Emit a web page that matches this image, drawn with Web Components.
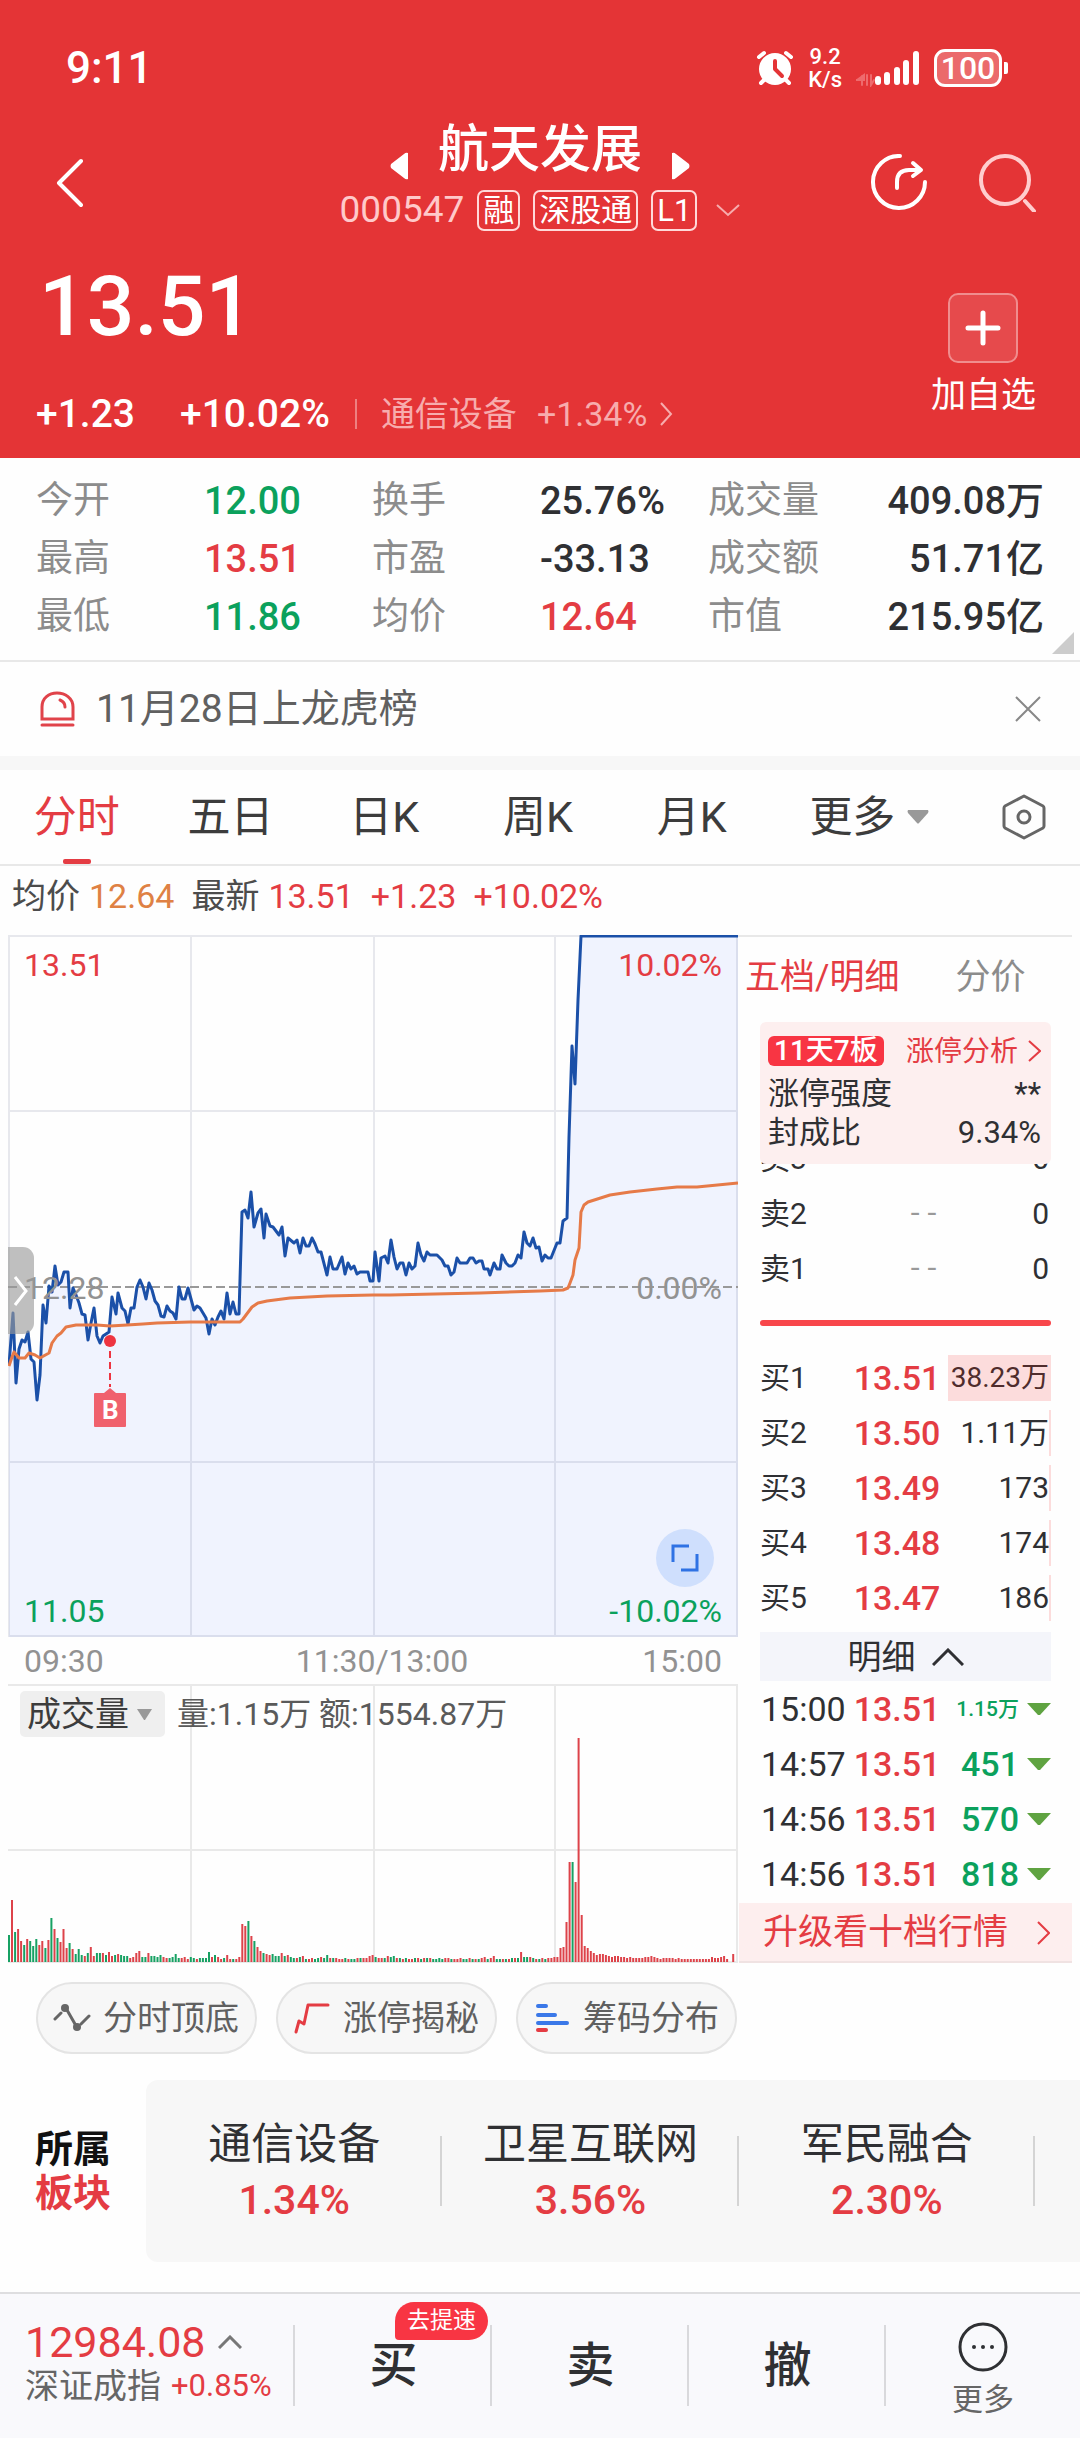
<!DOCTYPE html>
<html lang="zh-CN">
<head>
<meta charset="utf-8">
<meta name="viewport" content="width=device-width, initial-scale=1">
<title>航天发展 000547</title>
<style>
   :root {
      --col-brand: #e43436;
      --col-up: #e43c43;
      --col-down: #0ba15c;
      --col-text: #2f3033;
      --col-sub: #666;
      --col-mute: #8c8c8c;
      --col-line: #e8e8e8;
      --col-panel: #f7f7f7;
   }
   body {
      margin: 0;
      background: #fefefe;
      color: var(--col-text);
      font-family: Roboto, "Noto Sans CJK SC", sans-serif;
      font-size: 34px;
      line-height: 44px;
   }
   .band {
      height: 14px;
      background: var(--col-panel);
   }
   .market {
      display: grid;
      grid-template-columns: minmax(0, 730fr) minmax(0, 334fr);
      padding: 0 8px;
   }
   .chips {
      display: flex;
      gap: 19px;
      padding: 19px 36px 26px;
   }
</style>
</head>
<body>
   <stock-header name="航天发展" code="000547">
      <status-bar slot="status"></status-bar>
      <stock-tag>融</stock-tag>
      <stock-tag>深股通</stock-tag>
      <stock-tag>L1</stock-tag>
   </stock-header>
   <stat-grid></stat-grid>
   <notice-bar>11月28日上龙虎榜</notice-bar>
   <div class="band"></div>
   <period-tabs></period-tabs>
   <quote-line></quote-line>
   <div class="market">
      <time-chart></time-chart>
      <order-book></order-book>
   </div>
   <div class="chips">
      <tool-chip>
         <svg slot="icon" width="38" height="32" viewBox="0 0 38 32" fill="none" stroke="#666" stroke-width="3" stroke-linecap="round">
            <path d="M2 17 8 11M14 8 22 22M28 22 36 14"/>
            <circle cx="12" cy="6" r="4" fill="#666" stroke="none"/>
            <circle cx="24" cy="25" r="4" fill="#666" stroke="none"/>
         </svg>
         分时顶底
      </tool-chip>
      <tool-chip>
         <svg slot="icon" width="38" height="32" viewBox="0 0 38 32" fill="none" stroke="#e43c43" stroke-width="3" stroke-linecap="round" stroke-linejoin="round">
            <path d="M3 30 6 19 11 22 15 3H35"/>
         </svg>
         涨停揭秘
      </tool-chip>
      <tool-chip>
         <svg slot="icon" width="38" height="32" viewBox="0 0 38 32" stroke-width="4" stroke-linecap="round">
            <path d="M5 4H13M5 13H22M5 21H34" stroke="#3a78e8"/>
            <path d="M5 28H13" stroke="#e43c43"/>
         </svg>
         筹码分布
      </tool-chip>
   </div>
   <sector-strip>
      <sector-item change="1.34%">通信设备</sector-item>
      <sector-item change="3.56%">卫星互联网</sector-item>
      <sector-item change="2.30%">军民融合</sector-item>
   </sector-strip>
   <trade-bar></trade-bar>

<script>
const base_css = `
   *, :host { box-sizing: border-box; }
   :host { display: block; }
   svg { display: block; flex: none; }
   button, select {
      margin: 0;
      padding: 0;
      border: 0;
      background: none;
      color: inherit;
      font: inherit;
      appearance: none;
   }
   a { color: inherit; text-decoration: none; }
   .up { color: var(--col-up); }
   .down { color: var(--col-down); }
`;

function define(tag, render)
{
   customElements.define(tag, class extends HTMLElement
   {
      connectedCallback()
      {
         if (this.shadowRoot) return;
         const template = document.createElement('template');
         template.innerHTML = `<style>${base_css}</style>` + render(this);
         this.attachShadow({ mode: 'open' }).appendChild(template.content);
      }
   });
}

define('status-bar', () => `
   <style>
      :host {
         display: flex;
         justify-content: space-between;
         align-items: center;
         height: 104px;
         padding: 0 72px 0 66px;
      }
      .time { font-size: 44px; font-weight: 500; }
      .right { display: flex; align-items: center; gap: 14px; }
      .speed { font-size: 22px; font-weight: 500; line-height: 23px; text-align: center; }
      .speed span { display: block; }
      .battery { display: flex; align-items: center; gap: 2px; }
      .level {
         width: 68px;
         height: 38px;
         border: 3px solid #fff;
         border-radius: 11px;
         background: #ffffff44;
         font-size: 32px;
         font-weight: 500;
         line-height: 32px;
         text-align: center;
      }
      .tip { width: 4px; height: 12px; border-radius: 0 2px 2px 0; background: #fff; }
   </style>
   <span class="time">9:11</span>
   <div class="right">
      <svg width="38" height="38" viewBox="0 0 38 38" fill="none" stroke="#fff" stroke-width="4" stroke-linecap="round">
         <circle cx="19" cy="20" r="16" fill="#fff" stroke="none"/>
         <path d="M3 8 8 4M30 4 35 8M8 31 5 34M30 31 33 34"/>
         <path d="M19 12V20L26 27" stroke="#e43436" stroke-linejoin="round"/>
      </svg>
      <div class="speed"><span>9.2</span><span>K/s</span></div>
      <svg width="64" height="38" viewBox="0 0 64 38" fill="none" stroke="#fff" stroke-width="6" stroke-linecap="round">
         <path d="M22 30V33M31 26V33M41 21V33M50 14V33M60 5V33"/>
         <path d="M0 31H8V26L1 31M6 27V36M11 26V36M15 26V36L18 31" stroke="#ee6b6d" stroke-width="2"/>
      </svg>
      <div class="battery"><div class="level">100</div><div class="tip"></div></div>
   </div>
`);

define('stock-tag', () => `
   <style>
      :host {
         padding: 0 4px;
         border: 2px solid #ffd9d9;
         border-radius: 7px;
         font-size: 31px;
         line-height: 37px;
      }
   </style>
   <slot></slot>
`);

define('stock-header', el => `
   <style>
      :host { background: var(--col-brand); color: #fff; padding-top: 16px; }
      nav {
         display: grid;
         grid-template-columns: 1fr auto 1fr;
         align-items: center;
         height: 126px;
         padding: 0 44px;
      }
      .back { padding-left: 9px; justify-self: start; }
      .title { align-self: start; }
      .name {
         display: flex;
         justify-content: center;
         gap: 30px;
         font-size: 51px;
         line-height: 60px;
      }
      .name button { padding-top: 32px; }
      h1 { margin: 0; font: inherit; font-weight: 500; }
      .code { display: flex; align-items: center; gap: 13px; margin-top: 8px; }
      .code > span { font-size: 37px; color: #ffc9ca; }
      .code svg { margin-left: 6px; }
      .actions { display: flex; justify-content: flex-end; gap: 52px; }
      .quote { display: flex; justify-content: space-between; padding: 17px 36px 22px; }
      .price { padding-left: 3px; font-size: 84px; font-weight: 500; line-height: 88px; }
      .change { display: flex; align-items: center; margin-top: 41px; font-size: 39px; font-weight: 500; }
      .change span + span { margin-left: 45px; }
      .change a {
         display: flex;
         align-items: center;
         gap: 20px;
         height: 30px;
         margin-left: 25px;
         padding-left: 24px;
         border-left: 2px solid #ee8081;
         font-size: 34px;
         font-weight: 400;
         color: #f7acad;
      }
      .change svg { margin-left: -8px; }
      .add {
         display: flex;
         flex-direction: column;
         align-items: center;
         align-self: start;
         gap: 13px;
         margin: 30px 8px 0 0;
         font-size: 35px;
         line-height: 40px;
      }
      .add i {
         display: grid;
         place-items: center;
         width: 70px;
         height: 70px;
         border: 2px solid #f08d8e;
         border-radius: 10px;
         background: #e64a4c;
      }
   </style>
   <slot name="status"></slot>
   <nav>
      <button class="back" aria-label="返回">
         <svg width="30" height="50" viewBox="0 0 30 50" fill="none" stroke="#fff" stroke-width="4" stroke-linecap="round" stroke-linejoin="round"><path d="M28 3 6 25 28 47"/></svg>
      </button>
      <div class="title">
         <div class="name">
            <button aria-label="上一只"><svg width="18" height="28" viewBox="0 0 18 28" fill="#fff"><path d="M18 1V27Q16 28 14 26L1 16Q0 14 1 12L14 2Q16 0 18 1Z"/></svg></button>
            <h1>${el.getAttribute('name')}</h1>
            <button aria-label="下一只"><svg width="18" height="28" viewBox="0 0 18 28" fill="#fff"><path d="M0 1V27Q2 28 4 26L17 16Q18 14 17 12L4 2Q2 0 0 1Z"/></svg></button>
         </div>
         <div class="code">
            <span>${el.getAttribute('code')}</span>
            <slot></slot>
            <svg width="24" height="14" viewBox="0 0 24 14" fill="none" stroke="#f7acad" stroke-width="2"><path d="M1 2 12 12 23 2"/></svg>
         </div>
      </div>
      <div class="actions">
         <button aria-label="分享">
            <svg width="56" height="58" viewBox="0 0 56 58" fill="none" stroke="#fff" stroke-width="4" stroke-linecap="round" stroke-linejoin="round">
               <path d="M29 2A26 26 0 1 0 54 28"/>
               <path d="M26 34V28Q26 16 38 16H48M42 9 50 16 42 22"/>
            </svg>
         </button>
         <button aria-label="搜索">
            <svg width="57" height="58" viewBox="0 0 57 58" fill="none" stroke="#ffcdce" stroke-width="4" stroke-linecap="round">
               <circle cx="26" cy="26" r="24"/><path d="M46 47 55 57"/>
            </svg>
         </button>
      </div>
   </nav>
   <div class="quote">
      <div>
         <div class="price">13.51</div>
         <div class="change">
            <span>+1.23</span><span>+10.02%</span>
            <a href="#sector">通信设备 <b style="font-weight:400">+1.34%</b>
               <svg width="14" height="24" viewBox="0 0 14 24" fill="none" stroke="#f7acad" stroke-width="2"><path d="M2 1 12 12 2 23"/></svg>
            </a>
         </div>
      </div>
      <button class="add">
         <i><svg width="36" height="36" viewBox="0 0 36 36" stroke="#fff" stroke-width="5" stroke-linecap="round"><path d="M18 3V33M3 18H33"/></svg></i>
         加自选
      </button>
   </div>
`);

const stats = [
   ['今开', '12.00', 'down'], ['换手', '25.76%', ''], ['成交量', '409.08万', ''],
   ['最高', '13.51', 'up'], ['市盈', '-33.13', ''], ['成交额', '51.71亿', ''],
   ['最低', '11.86', 'down'], ['均价', '12.64', 'up'], ['市值', '215.95亿', ''],
];

define('stat-grid', () => `
   <style>
      :host {
         position: relative;
         padding: 14px 36px;
         border-bottom: 2px solid var(--col-line);
         font-size: 37px;
         line-height: 58px;
      }
      dl { display: grid; grid-template-columns: repeat(6, minmax(0, 1fr)); margin: 0; }
      dt { color: var(--col-mute); }
      dd { margin: 0; font-size: 38px; font-weight: 500; white-space: nowrap; }
      dd:nth-of-type(3n) { text-align: right; }
      .corner { position: absolute; right: 6px; bottom: 6px; }
   </style>
   <dl>${stats.map(([k, v, cls]) => `<dt>${k}</dt><dd class="${cls}">${v}</dd>`).join('')}</dl>
   <svg class="corner" width="22" height="22" viewBox="0 0 22 22" fill="#ccc"><path d="M22 0V22H0Z"/></svg>
`);

define('notice-bar', () => `
   <style>
      :host {
         display: flex;
         align-items: center;
         gap: 20px;
         height: 94px;
         padding: 0 39px;
         font-size: 39px;
         color: #606060;
      }
      button { margin-left: auto; }
   </style>
   <svg width="37" height="38" viewBox="0 0 37 38" fill="none" stroke="#e0434a" stroke-width="3" stroke-linecap="round">
      <path d="M3 29V17C3 8 10 3 18 3S34 8 34 17V29ZM3 35H34M21 10Q26 12 26 17"/>
   </svg>
   <slot></slot>
   <button aria-label="关闭"><svg width="26" height="26" viewBox="0 0 26 26" stroke="#888" stroke-width="2"><path d="M1 1 25 25M25 1 1 25"/></svg></button>
`);

define('period-tabs', () => `
   <style>
      :host { border-bottom: 2px solid var(--col-line); font-size: 43px; color: #3c3c3c; }
      nav {
         display: grid;
         grid-template-columns: repeat(5, 154fr) 202fr 108fr;
         height: 94px;
         padding-right: 2px;
      }
      button { display: flex; flex-direction: column; align-items: center; justify-content: center; }
      .on { color: var(--col-up); position: relative; }
      .on::after {
         content: "";
         position: absolute;
         bottom: 0;
         width: 28px;
         height: 5px;
         border-radius: 2px;
         background: var(--col-up);
      }
      .more { flex-direction: row; align-items: center; gap: 12px; }
      .set { align-items: flex-start; padding-left: 32px; }
   </style>
   <nav>
      <button class="on">分时</button><button>五日</button><button>日K</button><button>周K</button><button>月K</button>
      <button class="more">更多 <svg width="22" height="14" viewBox="0 0 22 14" fill="#999"><path d="M1 0H21Q22 1 21 3L12 13Q11 14 10 13L1 3Q0 1 1 0Z"/></svg></button>
      <button class="set" aria-label="设置">
         <svg width="44" height="46" viewBox="0 0 44 46" fill="none" stroke="#666" stroke-width="3" stroke-linejoin="round">
            <path d="M22 2 41 12Q42 13 42 14V32Q42 33 41 34L22 44 3 34Q2 33 2 32V14Q2 13 3 12Z"/><circle cx="22" cy="23" r="6"/>
         </svg>
      </button>
   </nav>
`);

define('quote-line', () => `
   <style>
      :host { display: flex; gap: 17px; height: 69px; padding: 8px 12px; color: #4c4c4c; }
      .avg { color: #df8144; }
      p { display: flex; gap: 9px; margin: 0; }
   </style>
   <p>均价 <span class="avg">12.64</span></p>
   <p>最新 <span class="up">13.51</span></p>
   <span class="up">+1.23</span>
   <span class="up">+10.02%</span>
`);

// Points on a 730 x 702 plane, the day's limit-up at y=0 and limit-down at y=702.
const price_points = `1,430 5,378 8,448 11,414 14,405 17,407 20,397 23,424 26,427 29,465 32,440 35,370 38,388 41,351 44,357
   47,331 50,350 53,347 56,337 60,337 62,373 65,353 68,360 71,368 74,379 77,380 80,405 83,388 86,373 89,401 92,408 95,401
   101,397 104,362 108,379 110,358 114,373 117,376 120,389 123,373 126,373 129,352 132,345 135,352 138,364 141,348 144,355
   147,366 150,370 153,381 156,382 159,371 162,376 165,378 168,384 171,352 174,364 177,364 180,353 183,364 186,375 189,371
   192,373 198,383 201,399 204,384 207,390 210,382 213,376 216,384 219,358 222,379 225,367 228,379 231,379 234,277 237,275
   240,283 243,257 246,292 250,278 253,274 256,303 258,279 262,291 265,292 271,300 274,292 277,321 280,303 286,308 289,305
   292,318 295,303 298,311 301,311 304,303 307,309 310,317 313,317 319,340 322,322 325,334 329,334 334,322 337,339 340,328
   343,334 346,331 349,339 352,337 360,337 362,346 365,346 367,317 371,346 373,323 377,321 380,328 383,305 386,322 389,334
   392,328 395,328 398,340 401,328 404,334 407,331 410,308 413,320 416,326 419,317 422,320 429,320 434,325 437,331 440,331
   443,340 446,337 449,323 452,328 459,328 462,323 465,323 468,328 471,326 474,326 476,334 480,334 482,340 486,328 489,334
   492,334 494,320 498,328 501,331 504,331 507,328 510,320 513,323 516,297 519,308 522,311 525,303 528,313 531,312 534,326
   537,320 540,323 543,323 549,308 552,308 555,286 559,283 561,202 564,111 567,149 570,65 573,1 730,1`;

const average_points = `1,431 4,422 6,417 11,423 17,423 21,418 27,420 32,423 41,418 44,408 49,401 53,398 58,392 68,390 89,390
   102,391 119,390 135,389 149,388 182,387 232,387 235,384 244,372 250,368 259,366 282,363 319,361 365,360 382,360 472,358
   532,356 555,355 560,353 562,348 565,340 567,325 571,313 573,277 576,270 580,267 602,260 622,257 649,254 669,252 689,252
   730,248`;

// One bar a minute: direction and height.
const volumes = `G27 R62 G30 R33 R21 G17 R23 G21 G16 G23 R17 R21 G14 R22 G44 R33 G24 R20 R33 R14 G19 R13 G8 G13 G7 R6 G9 R15
   R6 G9 G9 R9 G7 R10 R6 G7 R8 G7 G6 G6 R4 R5 R9 R11 G5 G5 R9 G6 G6 G5 G7 R5 R4 G4 G5 G8 G4 R4 R5 R3 G5 G4 R3 G4 G4 G4 G10
   R5 G7 R5 R3 G4 R7 R3 G3 R3 R5 R38 R36 G41 R26 G21 R15 R11 G9 R8 R7 G8 G6 G6 R9 G6 R7 G5 G4 R4 G5 R6 G3 R3 R4 G3 G4 R5
   G4 G7 R4 G4 R4 R3 R3 G4 R3 G3 G3 R4 G4 R4 R4 R6 R7 G5 R4 R4 G4 R6 G5 G6 R4 G4 R3 G4 R3 R3 G4 R4 G3 R4 G4 R4 G3 G3 G4 G3
   R4 R4 G3 R3 R3 R4 G3 G3 R4 G3 R3 G3 R4 R5 G3 R4 R6 G3 G3 R3 G3 R3 G4 R4 G4 R10 G5 G5 R5 G4 R3 G3 R4 G3 R4 R4 R5 R5 R14
   R15 R40 R100 G100 R80 R224 R47 R16 R14 R11 R9 R7 R8 R8 R7 R6 R5 R6 R6 R5 R5 R4 R5 R4 R4 R4 R4 R5 R5 R6 R5 R4 R3 R4 R4
   R4 R4 R3 R4 R3 R3 R3 R3 R3 R3 R3 R3 R3 R3 R5 R4 R4 R5 R6 R3 R0 R8`.split(/\s+/);

function bars(direction)
{
   return volumes.map((v, i) => v[0] === direction ? `M${Math.round(i * 30.3 + 10) / 10} 278v-${v.slice(1)}` : '').join('');
}

define('time-chart', () => `
   <style>
      :host { font-size: 32px; color: #929292; min-width: 0; }
      .plot { position: relative; height: 702px; }
      .volume { position: relative; height: 279px; }
      .plot > svg, .volume > svg { width: 100%; height: 100%; }
      svg path, svg polyline { vector-effect: non-scaling-stroke; }
      .scale {
         position: absolute;
         inset: 0;
         display: flex;
         flex-direction: column;
         justify-content: space-between;
         padding: 8px 16px 4px;
      }
      .scale div, .axis { display: flex; justify-content: space-between; }
      .axis { padding: 2px 16px 1px; }
      .axis .mid { margin-left: 18px; }
      .handle {
         position: absolute;
         left: 0;
         top: 312px;
         width: 26px;
         height: 87px;
         border-radius: 0 11px 11px 0;
         background: #999999a0;
      }
      .handle svg { margin: 0 5px; }
      .mark {
         position: absolute;
         left: 14%;
         top: 57%;
         width: 32px;
         margin-left: -16px;
         display: flex;
         flex-direction: column;
         align-items: center;
         color: #fff;
         font-size: 26px;
         font-weight: 700;
         line-height: 34px;
         text-align: center;
      }
      .mark span { width: 32px; background: #f0616d; border-radius: 1px; }
      .expand {
         position: absolute;
         right: 24px;
         bottom: 50px;
         width: 58px;
         height: 58px;
         border-radius: 50%;
         background: #cfdffd;
         display: grid;
         place-items: center;
      }
      .head {
         position: absolute;
         inset: 7px 12px auto;
         display: flex;
         align-items: center;
         gap: 12px;
         white-space: nowrap;
         color: #5a5a5a;
      }
      label {
         display: flex;
         align-items: center;
         gap: 8px;
         height: 46px;
         padding: 0 13px 0 7px;
         border-radius: 5px;
         background: #efefef;
         color: #3c3c3c;
         font-size: 34px;
      }
   </style>
   <div class="plot">
      <svg viewBox="0 0 730 702" preserveAspectRatio="none" fill="none">
         <polygon points="${price_points} 730,702 1,702" fill="#f0f3fe"/>
         <path d="M0 1H730M0 176H730M0 527H730M0 701H730M1 0V702M183 0V702M366 0V702M547 0V702M729 0V702" stroke="#1e285a" stroke-opacity=".1" stroke-width="2"/>
         <path d="M0 352H730" stroke="#999" stroke-width="2" stroke-dasharray="9 4"/>
         <polyline points="${price_points}" stroke="#1b50a8" stroke-width="3" stroke-linejoin="round"/>
         <polyline points="${average_points}" stroke="#e67a48" stroke-width="3" stroke-linejoin="round"/>
      </svg>
      <div class="scale">
         <div class="up"><span>13.51</span><span>10.02%</span></div>
         <div><span>12.28</span><span>0.00%</span></div>
         <div class="down"><span>11.05</span><span>-10.02%</span></div>
      </div>
      <button class="handle" aria-label="展开">
         <svg width="16" height="30" viewBox="0 0 16 30" fill="none" stroke="#fff" stroke-width="3"><path d="M2 1 13 15 2 29"/></svg>
      </button>
      <div class="mark">
         <svg width="16" height="58" viewBox="0 0 16 58" fill="none">
            <circle cx="8" cy="6" r="6" fill="#ee3440"/>
            <path d="M8 16V52" stroke="#ee3440" stroke-width="2" stroke-dasharray="7 4"/>
            <path d="M2 58 8 53 14 58Z" fill="#f0616d"/>
         </svg>
         <span>B</span>
      </div>
      <button class="expand" aria-label="全屏">
         <svg width="28" height="28" viewBox="0 0 28 28" fill="none" stroke="#2f72e4" stroke-width="3"><path d="M2 18V2H18M26 10V26H10"/></svg>
      </button>
   </div>
   <div class="axis"><span>09:30</span><span class="mid">11:30/13:00</span><span>15:00</span></div>
   <div class="volume">
      <svg viewBox="0 0 730 279" preserveAspectRatio="none" fill="none" stroke-width="2">
         <path d="M0 1H730M0 166H730M0 278H730M183 0V279M366 0V279M547 0V279M729 0V279" stroke="#e9e9e9"/>
         <path d="${bars('R')}" stroke="#dd434a"/>
         <path d="${bars('G')}" stroke="#17a163"/>
      </svg>
      <div class="head">
         <label>
            <select aria-label="指标"><option>成交量</option></select>
            <svg width="15" height="11" viewBox="0 0 15 11" fill="#999"><path d="M0 0H15L8 11H7Z"/></svg>
         </label>
         <span>量:1.15万 额:1554.87万</span>
      </div>
   </div>
`);

const sells = [['卖3', '--', '0'], ['卖2', '--', '0'], ['卖1', '--', '0']];
const buys = [
   ['买1', '13.51', '38.23万', '100%'], ['买2', '13.50', '1.11万', '2px'], ['买3', '13.49', '173', '2px'],
   ['买4', '13.48', '174', '2px'], ['买5', '13.47', '186', '2px'],
];
const ticks = [['15:00', '1.15万', 'small'], ['14:57', '451', ''], ['14:56', '570', ''], ['14:56', '818', '']];

define('order-book', () => `
   <style>
      :host { border-top: 2px solid var(--col-line); min-width: 0; }
      .tabs { display: flex; gap: 56px; height: 85px; padding-left: 7px; color: var(--col-mute); font-size: 35px; white-space: nowrap; }
      .tabs button { height: 82px; }
      .body { padding: 0 21px 0 22px; }
      .limit {
         position: relative;
         z-index: 1;
         display: flex;
         flex-direction: column;
         height: 142px;
         padding: 6px 10px 12px 8px;
         border-radius: 6px;
         background: #fdefef;
         font-size: 31px;
         line-height: 39px;
      }
      .limit div { display: flex; justify-content: space-between; align-items: center; white-space: nowrap; }
      .limit .top { height: 46px; font-size: 28px; }
      .badge {
         padding: 0 6px;
         border-radius: 6px;
         background: #f83543;
         color: #fff;
         font-weight: 500;
         line-height: 30px;
      }
      .top a { display: flex; align-items: center; gap: 10px; }
      table { width: 100%; border-collapse: collapse; table-layout: fixed; font-size: 30px; white-space: nowrap; }
      .sell { margin-top: -33px; color: var(--col-text); }
      tr { height: 55px; }
      th, td { padding: 0; font-weight: 400; text-align: right; }
      th { width: 24%; text-align: left; }
      .price { width: 38%; font-size: 34px; font-weight: 500; }
      .sell .none { color: #999; font: 28px "Liberation Mono", monospace; }
      .sell td:last-child { padding-right: 2px; }
      .size {
         height: 46px;
         margin-left: 8px;
         padding-right: 2px;
         line-height: 46px;
         background: linear-gradient(to left, #fcdcdc var(--fill), transparent 0);
      }
      hr { height: 6px; margin: 24px 0; border: 0; border-radius: 3px; background: #f8474b; }
      .buy tr:first-child .size { font-size: 28px; color: #4f2c2c; }
      .detail {
         display: flex;
         align-items: center;
         justify-content: center;
         gap: 16px;
         width: 100%;
         height: 49px;
         margin-top: 7px;
         background: #f4f5fa;
      }
      .tick { font-size: 34px; }
      .tick th { width: 30%; padding-left: 1px; }
      .tick .price { width: 32%; }
      .tick td div { display: flex; align-items: center; justify-content: flex-end; gap: 8px; font-weight: 500; }
      .tick .small { font-size: 21px; }
      .upgrade {
         display: flex;
         align-items: center;
         justify-content: space-between;
         height: 60px;
         margin: 2px 0 0 1px;
         padding: 2px 22px 0 24px;
         background: #fdeeee;
         border-bottom: 2px solid #f0e2e2;
         white-space: nowrap;
         font-size: 35px;
      }
   </style>
   <div class="tabs"><button class="up">五档/明细</button><button>分价</button></div>
   <div class="body">
      <div class="limit">
         <div class="top">
            <span class="badge">11天7板</span>
            <a class="up" href="#limit">涨停分析
               <svg width="13" height="22" viewBox="0 0 13 22" fill="none" stroke="#e43c43" stroke-width="2"><path d="M1 1 12 11 1 21"/></svg>
            </a>
         </div>
         <div><span>涨停强度</span><span>**</span></div>
         <div><span>封成比</span><span>9.34%</span></div>
      </div>
      <table class="sell">${sells.map(([n, p, s]) => `<tr><th scope="row">${n}</th><td class="price none">${p}</td><td>${s}</td></tr>`).join('')}</table>
      <hr>
      <table class="buy">${buys.map(([n, p, s, f]) => `<tr><th scope="row">${n}</th><td class="price up">${p}</td><td><div class="size" style="--fill:${f}">${s}</div></td></tr>`).join('')}</table>
      <button class="detail">明细
         <svg width="32" height="18" viewBox="0 0 32 18" fill="none" stroke="#2f3033" stroke-width="3"><path d="M1 17 16 2 31 17"/></svg>
      </button>
      <table class="tick">${ticks.map(([t, s, cls]) => `<tr><th scope="row">${t}</th><td class="price up">13.51</td><td class="down"><div class="${cls}">${s}
         <svg width="24" height="12" viewBox="0 0 24 12" fill="#5fa341"><path d="M0 0H24L13 12H11Z"/></svg></div></td></tr>`).join('')}</table>
   </div>
   <a class="upgrade up" href="#upgrade">升级看十档行情
      <svg width="13" height="24" viewBox="0 0 13 24" fill="none" stroke="#e43c43" stroke-width="2"><path d="M1 1 12 12 1 23"/></svg>
   </a>
`);

define('tool-chip', () => `
   <style>
      :host { color: #606060; }
      button {
         display: flex;
         align-items: center;
         gap: 12px;
         height: 72px;
         padding: 0 16px 0 15px;
         border: 2px solid #e4e4e4;
         border-radius: 36px;
         background: var(--col-panel);
         white-space: nowrap;
      }
   </style>
   <button><slot name="icon"></slot><span><slot></slot></span></button>
`);

define('sector-item', el => `
   <style>
      :host { position: relative; text-align: center; }
      :host::after {
         content: "";
         position: absolute;
         right: 0;
         top: 56px;
         width: 2px;
         height: 70px;
         background: #d4d4d4;
      }
      a { display: block; padding: 36px 0 34px; font-size: 43px; line-height: 56px; white-space: nowrap; }
      .up { display: block; font-size: 41px; font-weight: 500; }
   </style>
   <a href="#sector"><slot></slot><span class="up">${el.getAttribute('change')}</span></a>
`);

define('sector-strip', () => `
   <style>
      :host { display: flex; align-items: center; padding-bottom: 30px; }
      h2 {
         flex: none;
         width: 146px;
         margin: 0;
         padding-left: 35px;
         color: #111;
         font-size: 38px;
         font-weight: 700;
         line-height: 44px;
      }
      h2 span { display: block; }
      .list {
         flex: 1;
         display: grid;
         grid-template-columns: repeat(3, minmax(0, 1fr));
         padding-right: 45px;
         border-radius: 12px 0 0 12px;
         background: var(--col-panel);
      }
   </style>
   <h2><span>所属</span><span class="up">板块</span></h2>
   <div class="list"><slot></slot></div>
`);

define('trade-bar', () => `
   <style>
      :host {
         display: grid;
         grid-template-columns: 295fr repeat(3, 197fr) 194fr;
         height: 146px;
         border-top: 2px solid #dedee0;
         background: #f9f9fc;
      }
      :host > * { position: relative; }
      a, button { position: relative; }
      a::after, .act::after {
         content: "";
         position: absolute;
         right: 0;
         top: 31px;
         width: 2px;
         height: 81px;
         background: #d9d9dc;
      }
      .index { padding: 26px 0 0 25px; white-space: nowrap; color: var(--col-sub); }
      .index div { display: flex; align-items: center; gap: 12px; }
      .index div + div { gap: 10px; }
      .value { font-size: 43px; }
      .pct { font-size: 31px; }
      .act { font-size: 48px; font-weight: 500; }
      .tip {
         position: absolute;
         left: 100px;
         top: 8px;
         padding: 0 12px;
         border-radius: 19px 19px 19px 4px;
         background: #f83543;
         color: #fff;
         font-size: 23px;
         font-weight: 400;
         line-height: 38px;
         white-space: nowrap;
      }
      .more {
         display: flex;
         flex-direction: column;
         align-items: center;
         gap: 6px;
         padding-top: 28px;
         font-size: 31px;
         color: var(--col-sub);
      }
   </style>
   <a class="index" href="#index">
      <div><span class="value up">12984.08</span>
         <svg width="24" height="14" viewBox="0 0 24 14" fill="none" stroke="#777" stroke-width="3"><path d="M1 13 12 2 23 13"/></svg>
      </div>
      <div>深证成指 <span class="pct up">+0.85%</span></div>
   </a>
   <button class="act">买<span class="tip">去提速</span></button>
   <button class="act">卖</button>
   <button class="act">撤</button>
   <button class="more">
      <svg width="50" height="50" viewBox="0 0 50 50" fill="#2f3033">
         <circle cx="25" cy="25" r="23" fill="none" stroke="#2f3033" stroke-width="3"/>
         <circle cx="16" cy="25" r="2"/><circle cx="25" cy="25" r="2"/><circle cx="34" cy="25" r="2"/>
      </svg>
      更多
   </button>
`);
</script>
</body>
</html>
